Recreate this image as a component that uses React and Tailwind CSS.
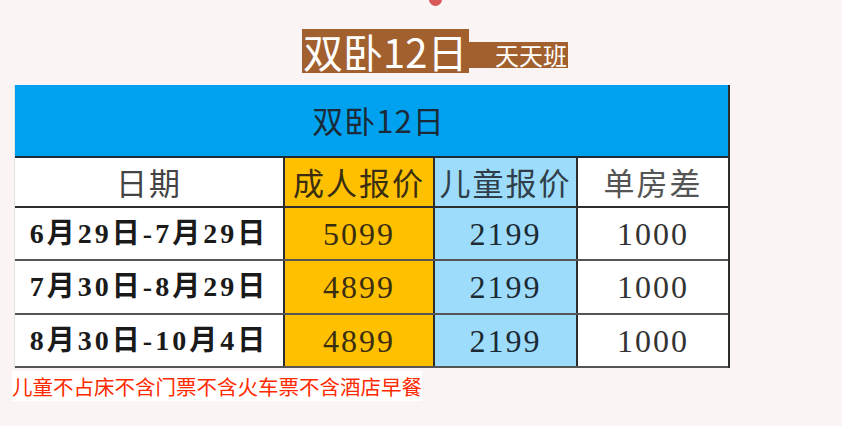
import React from 'react';

const rows = [
    { date: "6月29日-7月29日", adult: "5099", child: "2199", single: "1000", h: "h-[53px]" },
    { date: "7月30日-8月29日", adult: "4899", child: "2199", single: "1000", h: "h-[54px]" },
    { date: "8月30日-10月4日", adult: "4899", child: "2199", single: "1000", h: "h-[53px]" },
]

const serif = "font-['Liberation_Serif','Noto_Sans_CJK_SC',serif]"
const cjk = "font-['Noto_Sans_CJK_SC',sans-serif]"

const App = () => {
    return (
        <div className="relative min-h-[426px] w-[842px] overflow-hidden bg-[#faf4f4]">
            {/* red dot at top */}
            <div className="absolute left-[429px] top-[-7px] h-[13px] w-[13px] rounded-full bg-[#d9585a]"></div>

            {/* title */}
            <div className="flex items-start pl-[302px] pt-[29px]">
                <div className={`flex h-[44px] w-[167px] items-center bg-[#a2602f] pl-[1px] text-[40px] leading-[44px] text-white ${cjk}`}>
                    双卧12日
                </div>
                <div className={`mt-[13px] flex h-[26px] w-[99px] items-center justify-end bg-[#a2602f] pr-[1px] text-[24px] leading-[26px] text-white ${cjk}`}>
                    天天班
                </div>
            </div>

            {/* price table */}
            <div className="ml-[14px] mt-[12px] w-[716px] border-l border-r-2 border-l-[#e2e2e2] border-r-[#2d2d2d]">
                <div className={`flex h-[73px] items-center justify-center border-b-2 border-[#1f2a33] bg-[#00a2ef] pl-[14px] text-[31px] tracking-[1px] text-[#1b2a38] ${cjk}`}>
                    双卧12日
                </div>
                <div className={`grid h-[50px] grid-cols-[270px_150px_143px_150px] border-b-2 border-[#2d2d2d] text-[31px] tracking-[2px] ${cjk}`}>
                    <div className="flex items-center justify-center border-r-2 border-[#2d2d2d] bg-white text-[#444]">日期</div>
                    <div className="flex items-center justify-center border-r-2 border-[#2d2d2d] bg-[#ffc000] text-[#3a2e10]">成人报价</div>
                    <div className="flex items-center justify-center border-r-2 border-[#2d2d2d] bg-[#9ddcfb] text-[#2f3e48]">儿童报价</div>
                    <div className="flex items-center justify-center bg-white text-[#555]">单房差</div>
                </div>
                {rows.map((r, i) => (
                    <div key={i} className={`grid ${r.h} grid-cols-[270px_150px_143px_150px] border-b-2 border-[#555] text-[32px] tracking-[2px] ${serif}`}>
                        <div className="flex items-center justify-center border-r-2 border-[#2d2d2d] bg-white text-[28px] font-bold tracking-[3px] text-[#1a1a1a]">{r.date}</div>
                        <div className="flex items-center justify-center border-r-2 border-[#2d2d2d] bg-[#ffc000] text-[#3a2e10]">{r.adult}</div>
                        <div className="flex items-center justify-center border-r-2 border-[#2d2d2d] bg-[#9ddcfb] text-[#1c2a33]">{r.child}</div>
                        <div className="flex items-center justify-center bg-white text-[#333]">{r.single}</div>
                    </div>
                ))}
            </div>

            {/* note */}
            <div className="mt-[6px] pl-[12px]">
                <span className={`bg-white text-[20.5px] leading-[24px] text-[#ff2a00] ${cjk}`}>
                    儿童不占床不含门票不含火车票不含酒店早餐
                </span>
            </div>
        </div>
    )
}

export default App
